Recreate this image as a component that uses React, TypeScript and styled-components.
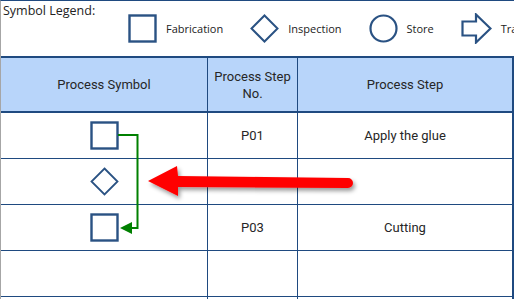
import React from 'react';
import styled, { createGlobalStyle } from 'styled-components';

const GlobalStyle = createGlobalStyle`
  html, body {
    margin: 0;
    padding: 0;
    background: #ffffff;
  }
`;

const BORDER = '#1f4a80';
const ICON = '#2a5283';

const Sheet = styled.div`
  position: relative;
  width: 514px;
  height: 299px;
  overflow: hidden;
  box-sizing: border-box;
  border-left: 1px solid #a6a6a6;
  border-top: 1px solid ${BORDER};
  background: #ffffff;
`;

const Legend = styled.div`
  display: flex;
  align-items: flex-start;
  height: 57px;
  box-sizing: border-box;
  border-bottom: 2px solid ${BORDER};
`;

const LegendTitle = styled.div`
  width: 127px;
  flex-shrink: 0;
  padding: 1px 0 0 2px;
  box-sizing: border-box;
  font-family: 'Open Sans', 'Noto Sans', sans-serif;
  font-size: 12.5px;
  color: #222;
  white-space: nowrap;
`;

const LegendItems = styled.div`
  display: flex;
  align-items: center;
  gap: 27px;
  margin-top: 12px;
  white-space: nowrap;
`;

const LegendItem = styled.div`
  display: flex;
  align-items: center;
  gap: 9px;
`;

const LegendLabel = styled.span`
  font-family: 'Open Sans', 'Noto Sans', sans-serif;
  font-size: 11px;
  color: #222;
`;

const Grid = styled.div`
  display: grid;
  grid-template-columns: 207px 90px 215px 1fr;
  grid-template-rows: 55px;
  grid-auto-rows: 46px;
  font-family: Roboto, 'Liberation Sans', sans-serif;
  font-size: 13px;
  color: #262626;
`;

const Cell = styled.div<{ $head?: boolean }>`
  display: flex;
  align-items: center;
  justify-content: center;
  text-align: center;
  line-height: 17px;
  box-sizing: border-box;
  border-right: 1px solid ${BORDER};
  border-bottom: ${p => (p.$head ? '2px' : '1px')} solid ${BORDER};
  background: ${p => (p.$head ? '#b8d5fa' : '#ffffff')};
`;

const Overlay = styled.svg`
  position: absolute;
  left: 0;
  top: 0;
  pointer-events: none;
`;

const Square = ({ stroke = 2.4 }: { stroke?: number }) => (
  <svg width="29" height="29" viewBox="0 0 29 29">
    <rect x="1.5" y="1.5" width="26" height="26" fill="none" stroke={ICON} strokeWidth={stroke} />
  </svg>
);

const Diamond = ({ stroke = 2 }: { stroke?: number }) => (
  <svg width="29" height="29" viewBox="0 0 29 29">
    <path d="M14.5 1.5 L27.5 14.5 L14.5 27.5 L1.5 14.5 Z" fill="none" stroke={ICON} strokeWidth={stroke} />
  </svg>
);

const Circle = () => (
  <svg width="29" height="29" viewBox="0 0 29 29">
    <circle cx="14.5" cy="14.5" r="13" fill="none" stroke={ICON} strokeWidth="2.2" />
  </svg>
);

const BlockArrow = () => (
  <svg width="31" height="31" viewBox="0 0 31 31">
    <path d="M1.5 8.5 H15 V1.5 L29.5 15.5 L15 29.5 V22.5 H1.5 Z" fill="none" stroke={ICON} strokeWidth="2.2" strokeLinejoin="miter" />
  </svg>
);

const legend = [
  { icon: <Square />, label: 'Fabrication' },
  { icon: <Diamond />, label: 'Inspection' },
  { icon: <Circle />, label: 'Store' },
  { icon: <BlockArrow />, label: 'Transport' },
];

const rows: { symbol: React.ReactNode; no: string; step: string }[] = [
  { symbol: <Square />, no: 'P01', step: 'Apply the glue' },
  { symbol: <Diamond stroke={1.8} />, no: '', step: '' },
  { symbol: <Square />, no: 'P03', step: 'Cutting' },
  { symbol: null, no: '', step: '' },
  { symbol: null, no: '', step: '' },
];

export default function App() {
  return (
    <>
      <GlobalStyle />
      <Sheet>
        <Legend>
          <LegendTitle>Symbol Legend:</LegendTitle>
          <LegendItems>
            {legend.map(item => (
              <LegendItem key={item.label}>
                {item.icon}
                <LegendLabel>{item.label}</LegendLabel>
              </LegendItem>
            ))}
          </LegendItems>
        </Legend>
        <Grid>
          <Cell $head>Process Symbol</Cell>
          <Cell $head>
            Process Step
            <br />
            No.
          </Cell>
          <Cell $head>Process Step</Cell>
          <Cell $head />
          {rows.map((r, i) => (
            <React.Fragment key={i}>
              <Cell>{r.symbol}</Cell>
              <Cell>{r.no}</Cell>
              <Cell>{r.step}</Cell>
              <Cell />
            </React.Fragment>
          ))}
        </Grid>
        <Overlay width="514" height="299" viewBox="0 0 514 299">
          <defs>
            <filter id="shadow" x="-10%" y="-50%" width="130%" height="200%">
              <feDropShadow dx="2" dy="3" stdDeviation="2" floodColor="#000" floodOpacity="0.4" />
            </filter>
            <marker id="tip" markerWidth="6" markerHeight="6" refX="5" refY="3" orient="auto">
              <path d="M0 0 L6 3 L0 6 Z" fill="#008000" />
            </marker>
          </defs>
          <path
            d="M117 134 H136.5 V227 H121"
            fill="none"
            stroke="#008000"
            strokeWidth="2"
            markerEnd="url(#tip)"
          />
          <path
            d="M147 180 L176 165 L177 175 L347 177 A5 5 0 0 1 347 187 L177 186 L177 195 Z"
            fill="#ff0000"
            filter="url(#shadow)"
          />
        </Overlay>
      </Sheet>
    </>
  );
}
